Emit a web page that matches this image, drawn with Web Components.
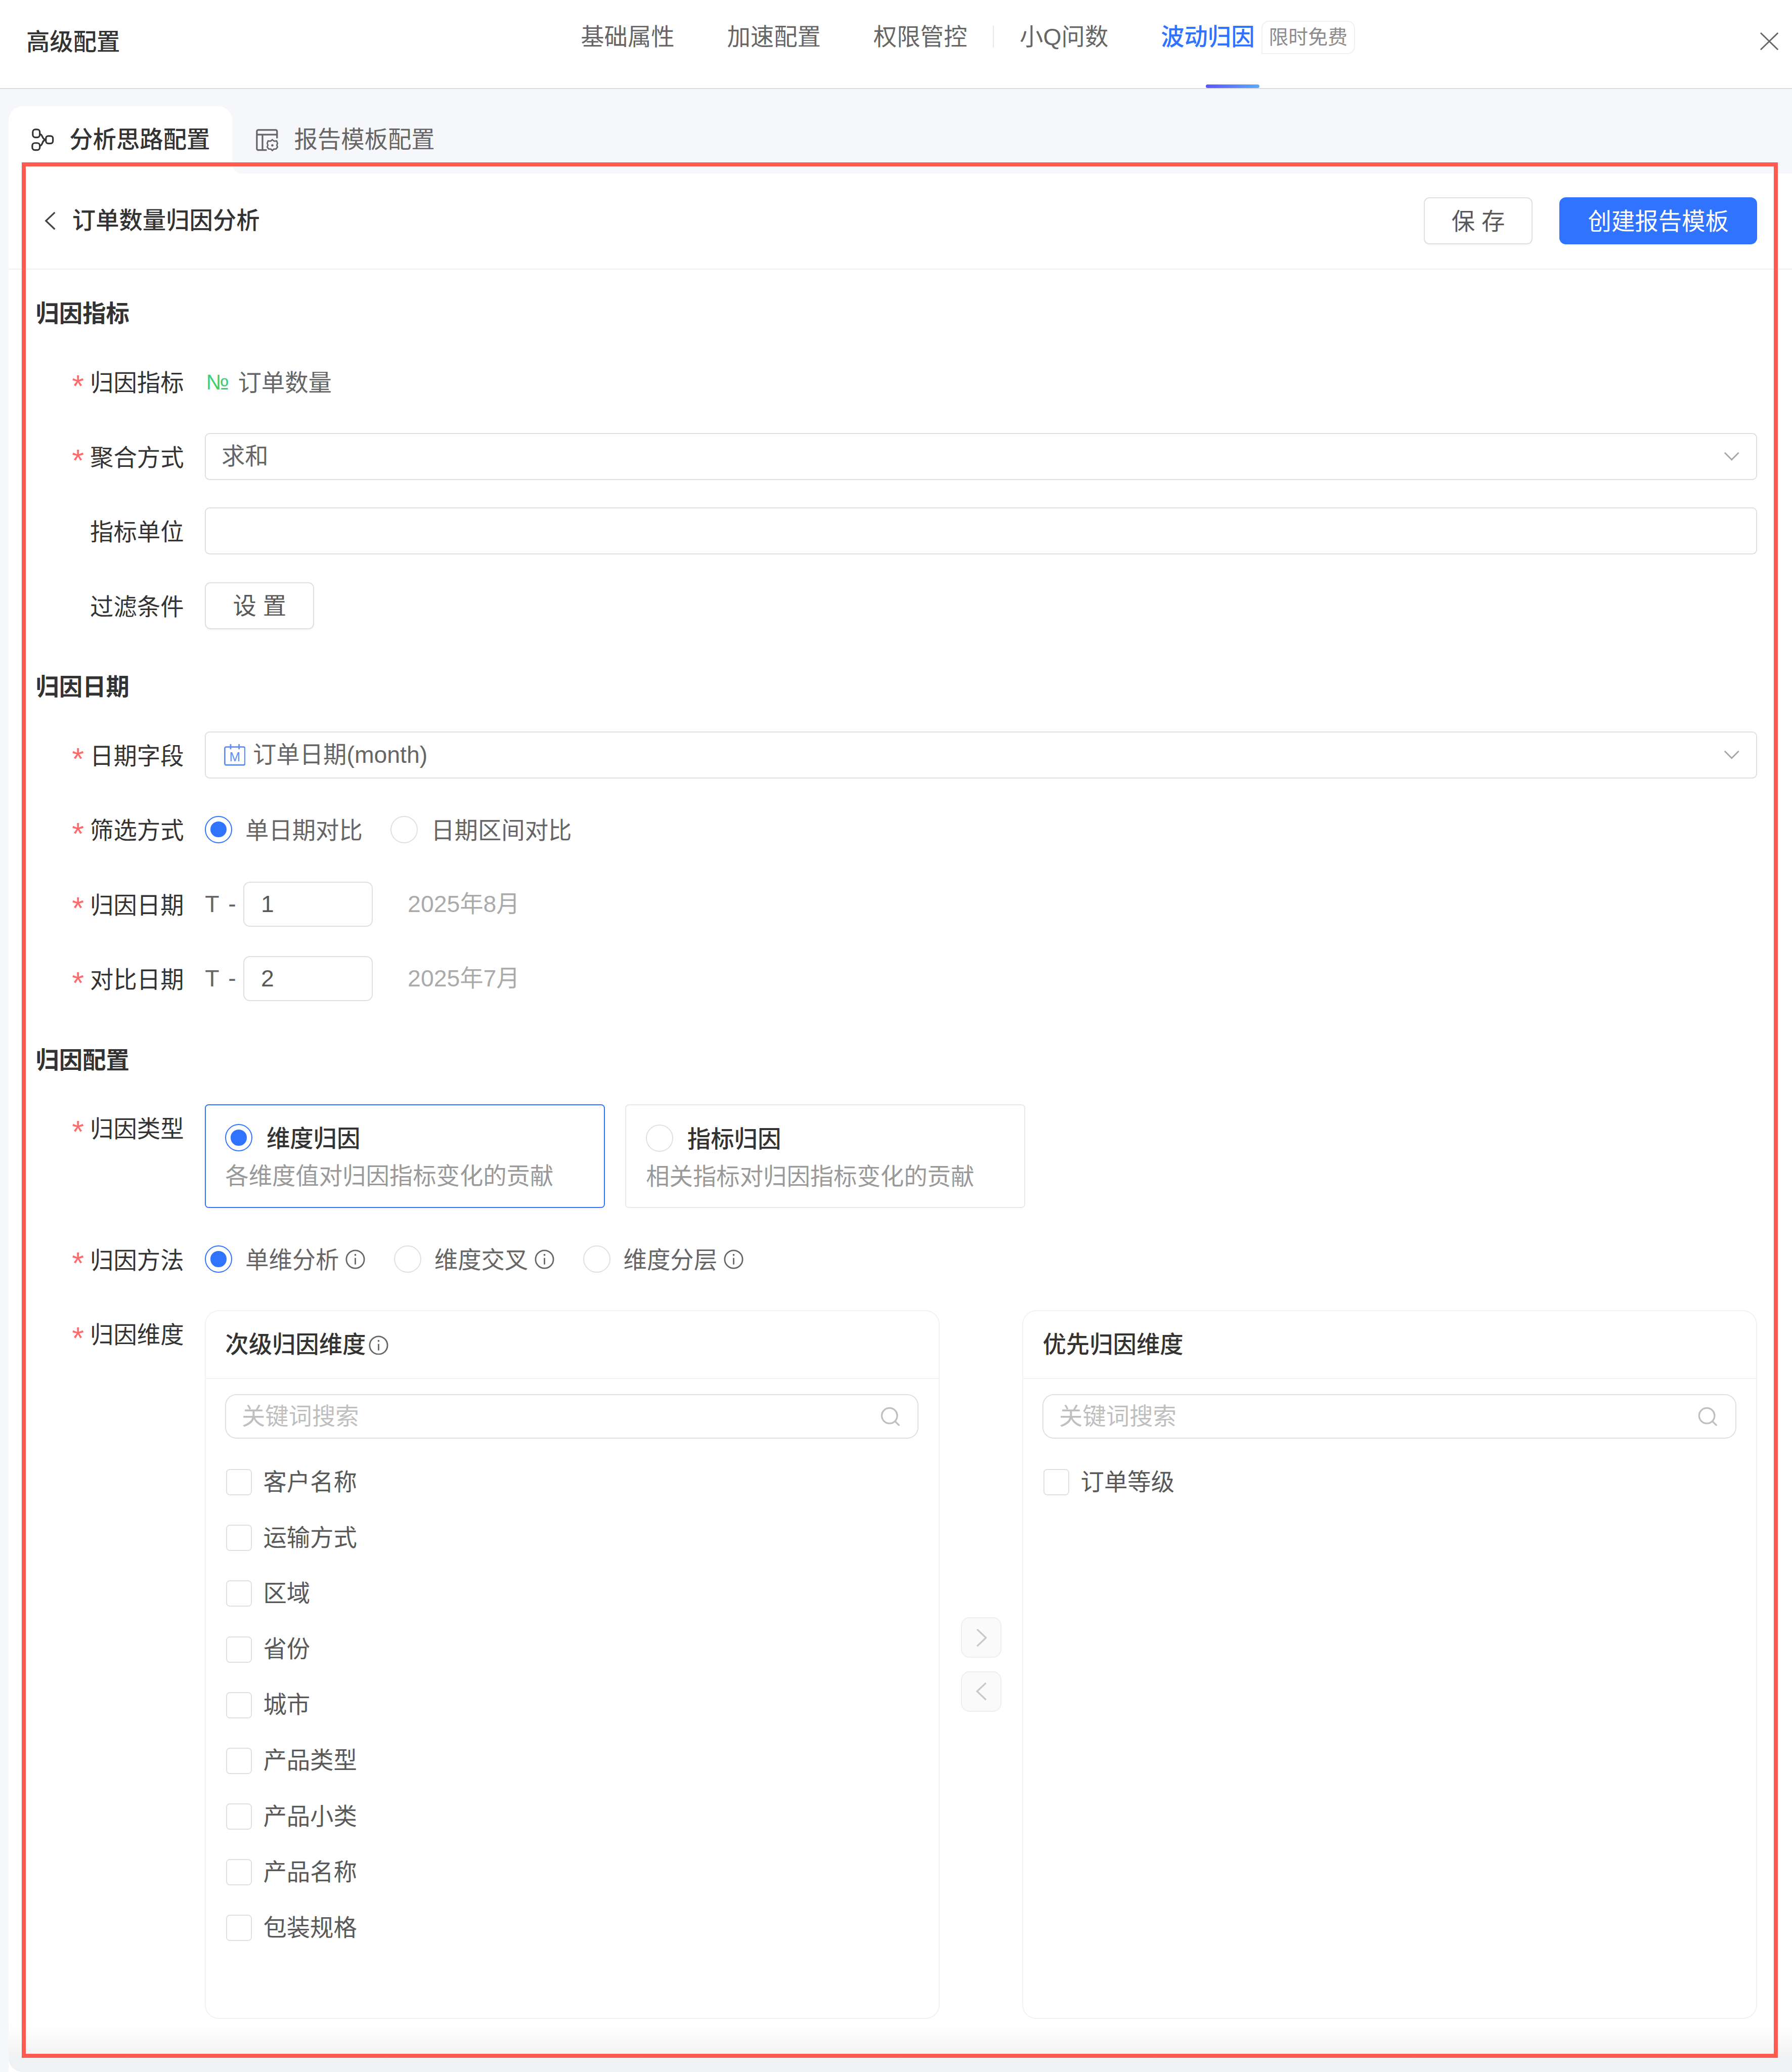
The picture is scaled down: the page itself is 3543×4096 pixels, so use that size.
<!DOCTYPE html>
<html lang="zh-CN">
<head>
<meta charset="utf-8">
<title>高级配置</title>
<style>
  html { background: #f6f7fb; overflow: hidden; }
  body {
    margin: 0;
    height: 100vh;
    overflow: hidden;
    font-family: "Liberation Sans", "Noto Sans CJK SC", sans-serif;
    font-size: 46.37px;
    line-height: 92.75px;
    color: #333;
  }
</style>
</head>
<body>
<config-page></config-page>

<script>
// All sizes below are measured on the 3820 wide reference, scaled once here
const SCALE = 3543 / 3820;
const scaled = s => s
  .replace(/(\d*\.?\d+)px/g, (m, n) => `${(n * SCALE).toFixed(3)}px`)
  .replace(/<svg( class="\w+")? width="(\d+)" height="(\d+)"/g, (m, c, w, h) => `<svg${c || ''} width="${(w * SCALE).toFixed(3)}" height="${(h * SCALE).toFixed(3)}"`);

// Small helper: every element gets an open shadow root from a css + html pair
const define = (name, css, html) => {
  customElements.define(name, class extends HTMLElement {
    constructor() {
      super();
      this.attachShadow({ mode: 'open' });
    }
    connectedCallback() {
      const body = typeof html === 'function' ? html(this) : html;
      this.shadowRoot.innerHTML = `<style>${scaled(css)}</style>${scaled(body)}`;
    }
  });
};

const CHEVRON_DOWN = `<svg width="34" height="20" viewBox="0 0 34 20" fill="none" stroke="#a6a6a6" stroke-width="3"><path d="M2 2 17 17 32 2"/></svg>`;
const chevron = (d, color, w, h, sw) => `<svg width="${w}" height="${h}" viewBox="0 0 24 40" fill="none" stroke="${color}" stroke-width="${sw}"><path d="${d}"/></svg>`;

define('info-icon', `
  :host { display: inline-flex; width: 42px; height: 42px; flex: none; }
`, `<svg width="42" height="42" viewBox="0 0 42 42" fill="none" stroke="#666" stroke-width="3">
  <circle cx="21" cy="21" r="19"/><path d="M21 18v14"/><circle cx="21" cy="11.5" r="2" fill="#666" stroke="none"/>
</svg>`);

define('nav-item', `
  :host { display: block; position: relative; height: 188px; color: #666; line-height: 100px; padding-top: 29px; box-sizing: border-box; white-space: nowrap; }
  :host([active]) { color: #2f73ff; font-weight: 500; }
  .row { display: flex; align-items: flex-start; }
  .badge {
    margin: 15px 0 0 14px; height: 71px; width: 200px; box-sizing: border-box;
    border: 2.2px solid #f0f0f0; border-radius: 16px 16px 16px 0;
    font-size: 42px; line-height: 67px; text-align: center; color: #8c8c8c; font-weight: 400; background: #fff;
  }
  .bar { position: absolute; left: 96px; bottom: 0; width: 114px; height: 8px; border-radius: 4px; background: linear-gradient(90deg, #5a55ff, #5aabff); }
`, el => `
  <div class="row"><slot></slot>${el.hasAttribute('badge') ? `<span class="badge">${el.getAttribute('badge')}</span>` : ''}</div>
  ${el.hasAttribute('active') ? '<span class="bar"></span>' : ''}
`);

define('top-header', `
  :host { display: flex; height: 190px; box-sizing: border-box; background: #fff; border-bottom: 2.2px solid #dcdcdf; padding: 0 29px 0 56px; }
  .title { width: 200px; line-height: 100px; padding-top: 40px; font-weight: 500; color: #333; white-space: nowrap; }
  nav { display: flex; margin-left: 982px; }
  .sep { width: 2px; height: 46px; margin: 55px 55px 0 55px; background: #e8e8e8; }
  nav-item + nav-item { margin-left: 112px; }
  nav-item.after-sep { margin-left: 0; }
  .close { margin-left: auto; padding-top: 69px; display: flex; align-items: flex-start; }
`, `
  <div class="title">高级配置</div>
  <nav>
    <nav-item>基础属性</nav-item>
    <nav-item>加速配置</nav-item>
    <nav-item>权限管控</nav-item>
    <div class="sep"></div>
    <nav-item class="after-sep">小Q问数</nav-item>
    <nav-item active badge="限时免费">波动归因</nav-item>
  </nav>
  <div class="close"><svg width="39" height="38" viewBox="0 0 39 38" fill="none" stroke="#666" stroke-width="3"><path d="M1 1 38 37M38 1 1 37"/></svg></div>
`);

define('sub-tabs', `
  :host { display: flex; height: 180px; padding: 36px 0 0 18px; box-sizing: border-box; }
  .tab { display: flex; align-items: center; height: 144px; box-sizing: border-box; white-space: nowrap; position: relative; }
  .tab svg { flex: none; }
  .on { width: 477px; padding-left: 49px; gap: 33px; background: #fff; border-radius: 30px 30px 0 0; color: #333; font-weight: 500; }
  .on::after {
    content: ""; position: absolute; right: -20px; bottom: 0; width: 20px; height: 20px;
    background: radial-gradient(circle at 100% 0, transparent 19px, #fff 20px);
  }
  .off { padding-left: 51px; gap: 33px; color: #666; }
`, `
  <div class="tab on">
    <svg width="48" height="48" viewBox="0 0 48 48" fill="none" stroke="#333" stroke-width="3.5">
      <rect x="3" y="2" width="15" height="17" rx="5.5"/><rect x="2" y="31" width="16" height="15" rx="5.5"/><rect x="31" y="16" width="15" height="16" rx="5"/>
      <path d="M18 12c7 0 4 12 13 12M18 37c7 0 4-13 13-13"/>
    </svg>
    <span>分析思路配置</span>
  </div>
  <div class="tab off">
    <svg width="48" height="48" viewBox="0 0 48 48" fill="none" stroke="#666" stroke-width="3.5">
      <path d="M45 21V6a3 3 0 0 0-3-3H5a3 3 0 0 0-3 3v37a3 3 0 0 0 3 3h18M2 13h43M14 13v33"/>
      <path d="M35 24l4 3 5-.5 2 5-1.5 4 1.5 4-3 4-5 .5-3 3-3-3-5-.5-3-4 1.5-4-1.5-4 2-5 5 .5z" stroke-width="3"/>
      <circle cx="35" cy="36" r="2.5" fill="#666" stroke="none"/>
    </svg>
    <span>报告模板配置</span>
  </div>
`);

define('ui-button', `
  :host { display: inline-flex; align-items: center; justify-content: center; height: 100px; box-sizing: border-box; padding-top: 3px; border: 2.2px solid #e0e0e0; border-radius: 12px; background: #fff; color: #595959; box-shadow: 0 3px 0 rgba(0,0,0,.02); white-space: nowrap; }
  :host([primary]) { background: #2f73ff; border-color: #2f73ff; color: #fff; border-radius: 14px; }
`, `<slot></slot>`);

define('page-toolbar', `
  :host { display: flex; align-items: center; height: 205px; box-sizing: border-box; border-bottom: 2.2px solid #f0f0f0; padding: 0 74px 1px 77px; }
  .back { margin-right: 35px; display: flex; }
  .name { font-weight: 500; color: #333; }
  .grow { flex: 1; }
  .save { width: 232px; margin-right: 57px; }
  .create { width: 422px; }
`, `
  <span class="back">${chevron('M22 2 3 20 22 38', '#444', 24, 40, 3.5)}</span>
  <span class="name">订单数量归因分析</span>
  <span class="grow"></span>
  <ui-button class="save">保 存</ui-button>
  <ui-button class="create" primary>创建报告模板</ui-button>
`);

define('form-section', `
  :host { display: block; margin-top: 74px; }
  :host(:first-child) { margin-top: 44px; }
  h3 { margin: 0 0 44px; font-size: 50px; font-weight: 600; line-height: 100px; color: #333; }
  :host(:first-child) h3 { margin-bottom: 45px; }
  .rows { display: flex; flex-direction: column; gap: 59px; }
`, el => `<h3>${el.getAttribute('heading')}</h3><div class="rows"><slot></slot></div>`);

define('form-row', `
  :host { display: flex; min-height: 100px; }
  label { width: 361px; height: 100px; flex: none; display: flex; justify-content: flex-end; padding: 3px 45px 0 0; box-sizing: border-box; color: #333; white-space: nowrap; }
  .star { color: #ff6b6b; margin-right: 13px; padding-top: 6px; font-size: 66px; line-height: 100px; }
  .body { flex: 1; min-width: 0; display: flex; align-items: center; color: #666; }
  :host([top]) .body { align-items: flex-start; }
`, el => `
  <label>${el.hasAttribute('required') ? '<span class="star">*</span>' : ''}<span>${el.getAttribute('label')}</span></label>
  <div class="body"><slot></slot></div>
`);

define('select-box', `
  :host { display: flex; align-items: center; flex: 1; height: 100px; box-sizing: border-box; border: 2.2px solid #e0e0e0; border-radius: 10px; padding: 0 35px 0 33px; color: #666; background: #fff; }
  .text { flex: 1; display: flex; align-items: center; gap: 20px; white-space: nowrap; }
`, `<div class="text"><slot></slot></div>${CHEVRON_DOWN}`);

define('text-field', `
  :host { display: flex; align-items: center; flex: 1; height: 100px; box-sizing: border-box; border: 2.2px solid #e0e0e0; border-radius: 10px; padding: 0 35px; color: #595959; background: #fff; }
  :host([small]) { flex: none; width: 276px; height: 96px; border-radius: 14px; }
`, `<slot></slot>`);

define('ui-radio', `
  :host { display: inline-flex; align-items: center; gap: 28px; height: 100px; white-space: nowrap; color: #666; }
  .r { width: 58px; height: 58px; box-sizing: border-box; border: 2.2px solid #e0e0e0; border-radius: 50%; background: #fff; flex: none; display: flex; align-items: center; justify-content: center; }
  :host([checked]) .r { border-color: #2f73ff; }
  :host([checked]) .r::after { content: ""; width: 34px; height: 34px; border-radius: 50%; background: #2f73ff; }
  .l { padding-top: 5px; line-height: 95px; }
`, `<span class="r"></span><span class="l"><slot></slot></span>`);

define('radio-card', `
  :host { display: block; width: 853px; height: 221px; box-sizing: border-box; border: 2.2px solid #e8e8e8; border-radius: 8px; padding: 41px 0 0 42px; }
  :host([checked]) { border: 2.2px solid #2f73ff; padding: 40px 0 0 41px; }
  ui-radio { display: flex; height: 58px; color: #333; font-weight: 500; gap: 30px; }
  .desc { margin-top: 25px; line-height: 58px; color: #999; white-space: nowrap; }
`, el => `
  <ui-radio ${el.hasAttribute('checked') ? 'checked' : ''}>${el.getAttribute('heading')}</ui-radio>
  <div class="desc">${el.getAttribute('desc')}</div>
`);

define('check-item', `
  :host { display: flex; align-items: center; height: 118.75px; padding-left: 2px; gap: 24px; color: #595959; white-space: nowrap; }
  .b { width: 55px; height: 56px; box-sizing: border-box; border: 2.2px solid #e0e0e0; border-radius: 8px; background: #fff; flex: none; }
`, `<span class="b"></span><slot></slot>`);

define('dim-panel', `
  :host { display: block; flex: 1; min-width: 0; height: 1510px; box-sizing: border-box; border: 2.2px solid #f2f2f2; border-radius: 30px; color: #333; }
  header { display: flex; align-items: center; gap: 6px; height: 144px; box-sizing: border-box; padding: 2px 0 0 41px; border-bottom: 2.2px solid #f2f2f2; font-weight: 500; line-height: 140px; }
  .search { display: flex; align-items: center; justify-content: space-between; height: 94px; box-sizing: border-box; margin: 33px 43px 34px 41px; border: 2.2px solid #e0e0e0; border-radius: 24px; padding: 0 37px 0 33px; color: #bfbfbf; }
  .list { margin-left: 41px; }
`, el => `
  <header>${el.getAttribute('heading')}${el.hasAttribute('info') ? '<info-icon></info-icon>' : ''}</header>
  <div class="search"><span>关键词搜索</span>
    <svg width="42" height="42" viewBox="0 0 42 42" fill="none" stroke="#bfbfbf" stroke-width="3.5"><circle cx="19" cy="19" r="16.5"/><path d="M31 31l9 9"/></svg>
  </div>
  <div class="list"><slot></slot></div>
`);

define('transfer-arrows', `
  :host { display: flex; flex-direction: column; align-items: center; justify-content: center; gap: 29px; width: 176px; flex: none; }
  .b { width: 86px; height: 86px; box-sizing: border-box; border: 2.2px solid #eeeeee; border-radius: 18px; background: #fafafa; display: flex; align-items: center; justify-content: center; }
`, `
  <span class="b">${chevron('M3 2 22 20 3 38', '#c8c8c8', 24, 40, 3.5)}</span>
  <span class="b">${chevron('M22 2 3 20 22 38', '#c8c8c8', 24, 40, 3.5)}</span>
`);

define('config-page', `
  :host { display: block; position: relative; height: 100vh; overflow: hidden; background: #f6f7fb; }
  .card { height: 4230px; box-sizing: border-box; margin-left: 18px; background: #fff; border-radius: 0 0 0 30px; }
  .form { padding: 0 74px 0 58px; }
  .hint { color: #aaa; margin-left: 74px; white-space: nowrap; }
  .t { color: #666; margin-right: 13px; white-space: nowrap; letter-spacing: 3px; }
  .group { display: flex; }
  .group ui-radio + ui-radio { margin-left: 60px; }
  .method { display: flex; }
  .method .m { display: flex; align-items: center; width: 403px; gap: 14px; flex: none; }
  .metric { color: #3ecf72; font-size: 46px; margin: 0 19px 0 2px; line-height: 100px; }
  .txt { padding-top: 5px; line-height: 95px; }
  .cal { margin-left: 5px; margin-right: -4px; flex: none; }
  .cards { display: flex; gap: 43px; }
  .cols { display: flex; flex: 1; min-width: 0; }
  .fade { position: absolute; left: 18px; right: 0; bottom: 0; height: 100px; border-radius: 0 0 0 30px; background: linear-gradient(rgba(240,241,242,0), #f0f1f2 75%); pointer-events: none; }
  .frame { position: absolute; left: 46px; top: 346px; width: 3744px; height: 4040px; box-sizing: border-box; border: 8.7px solid #ff5a4f; pointer-events: none; }
`, `
  <top-header></top-header>
  <sub-tabs></sub-tabs>
  <div class="card">
    <page-toolbar></page-toolbar>
    <div class="form">
      <form-section heading="归因指标">
        <form-row required label="归因指标"><span class="metric">№</span><span class="txt">订单数量</span></form-row>
        <form-row required label="聚合方式"><select-box>求和</select-box></form-row>
        <form-row label="指标单位"><text-field></text-field></form-row>
        <form-row label="过滤条件"><ui-button style="width:233px">设 置</ui-button></form-row>
      </form-section>

      <form-section heading="归因日期">
        <form-row required label="日期字段">
          <select-box>
            <svg class="cal" width="46" height="46" viewBox="0 0 46 46" fill="none" stroke="#5b8ff9" stroke-width="3">
              <rect x="1.5" y="6" width="43" height="38.5" rx="3"/><path d="M14 0v11M32 0v11"/>
              <text x="23" y="37" text-anchor="middle" font-size="28" fill="#5b8ff9" stroke="none" font-family="Liberation Sans">M</text>
            </svg>
            <span>订单日期(month)</span>
          </select-box>
        </form-row>
        <form-row required label="筛选方式">
          <div class="group"><ui-radio checked>单日期对比</ui-radio><ui-radio>日期区间对比</ui-radio></div>
        </form-row>
        <form-row required label="归因日期">
          <span class="t">T -</span><text-field small>1</text-field><span class="hint">2025年8月</span>
        </form-row>
        <form-row required label="对比日期">
          <span class="t">T -</span><text-field small>2</text-field><span class="hint">2025年7月</span>
        </form-row>
      </form-section>

      <form-section heading="归因配置">
        <form-row required top label="归因类型">
          <div class="cards">
            <radio-card checked heading="维度归因" desc="各维度值对归因指标变化的贡献"></radio-card>
            <radio-card heading="指标归因" desc="相关指标对归因指标变化的贡献"></radio-card>
          </div>
        </form-row>
        <form-row required label="归因方法">
          <div class="method">
            <span class="m"><ui-radio checked>单维分析</ui-radio><info-icon></info-icon></span>
            <span class="m"><ui-radio>维度交叉</ui-radio><info-icon></info-icon></span>
            <span class="m"><ui-radio>维度分层</ui-radio><info-icon></info-icon></span>
          </div>
        </form-row>
        <form-row required top label="归因维度">
          <div class="cols">
            <dim-panel heading="次级归因维度" info>
              <check-item>客户名称</check-item>
              <check-item>运输方式</check-item>
              <check-item>区域</check-item>
              <check-item>省份</check-item>
              <check-item>城市</check-item>
              <check-item>产品类型</check-item>
              <check-item>产品小类</check-item>
              <check-item>产品名称</check-item>
              <check-item>包装规格</check-item>
            </dim-panel>
            <transfer-arrows></transfer-arrows>
            <dim-panel heading="优先归因维度">
              <check-item>订单等级</check-item>
            </dim-panel>
          </div>
        </form-row>
      </form-section>
    </div>
  </div>
  <div class="fade"></div>
  <div class="frame"></div>
`);
</script>
</body>
</html>
